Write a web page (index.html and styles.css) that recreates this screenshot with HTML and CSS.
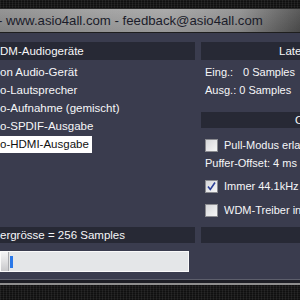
FILE: index.html
```html
<!DOCTYPE html>
<html lang="de">
<head>
  <meta charset="UTF-8">
  <title>ASIO4ALL</title>
  <link rel="stylesheet" href="styles.css">
</head>
<body>
  <div class="window">
    <div class="frame-top"></div>
    <div class="titlebar">- www.asio4all.com - feedback@asio4all.com</div>

    <div class="panel">
      <div class="columns">
        <!-- left: device list -->
        <div class="col col-left">
          <div class="header">DM-Audiogeräte</div>
          <ul class="devices">
            <li>on Audio-Gerät</li>
            <li>o-Lautsprecher</li>
            <li>o-Aufnahme (gemischt)</li>
            <li>o-SPDIF-Ausgabe</li>
            <li><span class="selected">o-HDMI-Ausgabe</span></li>
          </ul>
        </div>

        <!-- right: latency + options -->
        <div class="col col-right">
          <div class="header header-latency">Latenz</div>
          <div class="latency">
            <div class="row"><span class="label">Eing.:</span>0 Samples</div>
            <div class="row">Ausg.: 0 Samples</div>
          </div>
          <div class="header header-options">Optionen</div>
          <div class="options">
            <label class="check"><span class="box"></span>Pull-Modus erlauben</label>
            <div class="row offset">Puffer-Offset: 4 ms</div>
            <label class="check"><span class="box">
              <svg width="11" height="11" viewBox="0 0 11 11"><path d="M2 5.5 L4.3 8.5 L9 1.5" fill="none" stroke="#2b3f96" stroke-width="1.6"/></svg>
            </span>Immer 44.1kHz</label>
            <label class="check"><span class="box"></span>WDM-Treiber in</label>
          </div>
        </div>
      </div>

      <div class="columns bottom">
        <div class="col col-left">
          <div class="header">ergrösse = 256 Samples</div>
          <div class="slider">
            <span class="thumb"></span>
            <span class="caret"></span>
          </div>
        </div>
        <div class="col col-right">
          <div class="header"></div>
        </div>
      </div>
    </div>

    <div class="frame-bottom"></div>
  </div>
</body>
</html>
```

FILE: styles.css
```css
html, body {
  margin: 0;
  padding: 0;
  background-color: #141414;
  overflow: hidden;
}
body {
  font-family: "Liberation Sans", Arial, sans-serif;
  font-size: 11.5px;
  color: #f6f6f8;
}
.window {
  width: 300px;
  height: 300px;
  overflow: hidden;
}

/* dark noisy frame */
.frame-top, .frame-bottom {
  background-color: #1a1a1a;
  background-image:
    repeating-linear-gradient(90deg, rgba(255,255,255,0.06) 0 1px, transparent 1px 3px),
    repeating-linear-gradient(0deg, rgba(0,0,0,0.4) 0 1px, transparent 1px 2px);
}
.frame-top {
  height: 8px;
}
.titlebar {
  height: 23px;
  line-height: 24px;
  border-top: 1px solid #2c2c2c;
  border-bottom: 1px solid #1e1e1e;
  background:
    linear-gradient(180deg, rgba(255,255,255,0.08), rgba(0,0,0,0.08)),
    linear-gradient(90deg, #8c8c8c 0%, #9e9e9e 35%, #a4a4a4 55%, #8e8e8e 80%, #4e4e4e 100%);
  color: #1b1c2a;
  font-size: 13.2px;
  white-space: nowrap;
  text-indent: -2px;
}

/* main panel */
.panel {
  background-color: #3a3c4e;
  padding-top: 9px;
  height: 237px;
}
.columns {
  display: flex;
  gap: 6px;
}
.col-left {
  width: 195px;
  flex: none;
}
.col-right {
  width: 192px;
  flex: none;
  font-size: 11px;
}
.header {
  height: 18px;
  line-height: 18px;
  background-color: #272935;
  white-space: nowrap;
}
.header-latency {
  padding-left: 78px;
  font-size: 11.5px;
}
.header-options {
  height: 16px;
  line-height: 16px;
  padding-left: 94px;
  font-size: 11.5px;
}

.devices {
  list-style: none;
  margin: 3px 0 0;
  padding: 0;
}
.devices li {
  height: 18px;
  line-height: 18px;
  white-space: nowrap;
}
.selected {
  display: inline-block;
  height: 17px;
  line-height: 17px;
  padding-right: 3px;
  background-color: #ffffff;
  color: #111111;
}

.latency {
  padding: 3px 0 0 4px;
  height: 49px;
}
.label {
  display: inline-block;
  width: 38px;
}
.row {
  height: 18px;
  line-height: 18px;
  white-space: nowrap;
}
.options {
  padding: 10px 0 0 4px;
}
.check {
  display: flex;
  align-items: center;
  gap: 6px;
  height: 14px;
  white-space: nowrap;
}
.box {
  width: 11px;
  height: 11px;
  border: 1px solid #8a8b90;
  background: linear-gradient(135deg, #d6d7da, #f6f6f7);
  display: flex;
  align-items: center;
  justify-content: center;
}
.offset {
  margin: 2px 0 7px;
}
.options .check + .check {
  margin-top: 10px;
}

.bottom {
  margin-top: 10px;
}
.bottom .header {
  height: 16px;
  line-height: 16px;
}
.slider {
  margin-top: 8px;
  width: 187px;
  height: 19px;
  border: 1px solid #fafafa;
  background-color: #e4e6e8;
  display: flex;
  align-items: center;
}
.thumb {
  width: 7px;
  height: 19px;
  background: linear-gradient(180deg, #f4f4f5, #e2e2e4 45%, #c9c9cc);
  border-right: 1px solid #a9aaae;
}
.caret {
  width: 3px;
  height: 12px;
  margin-left: 1px;
  background-color: #2a78e8;
}

.frame-bottom {
  height: 32px;
  border-top: 1px solid #5d5f6c;
  box-shadow: inset 0 3px 0 #1c1d24, inset 0 5px 0 #8e8e8e;
}
```
